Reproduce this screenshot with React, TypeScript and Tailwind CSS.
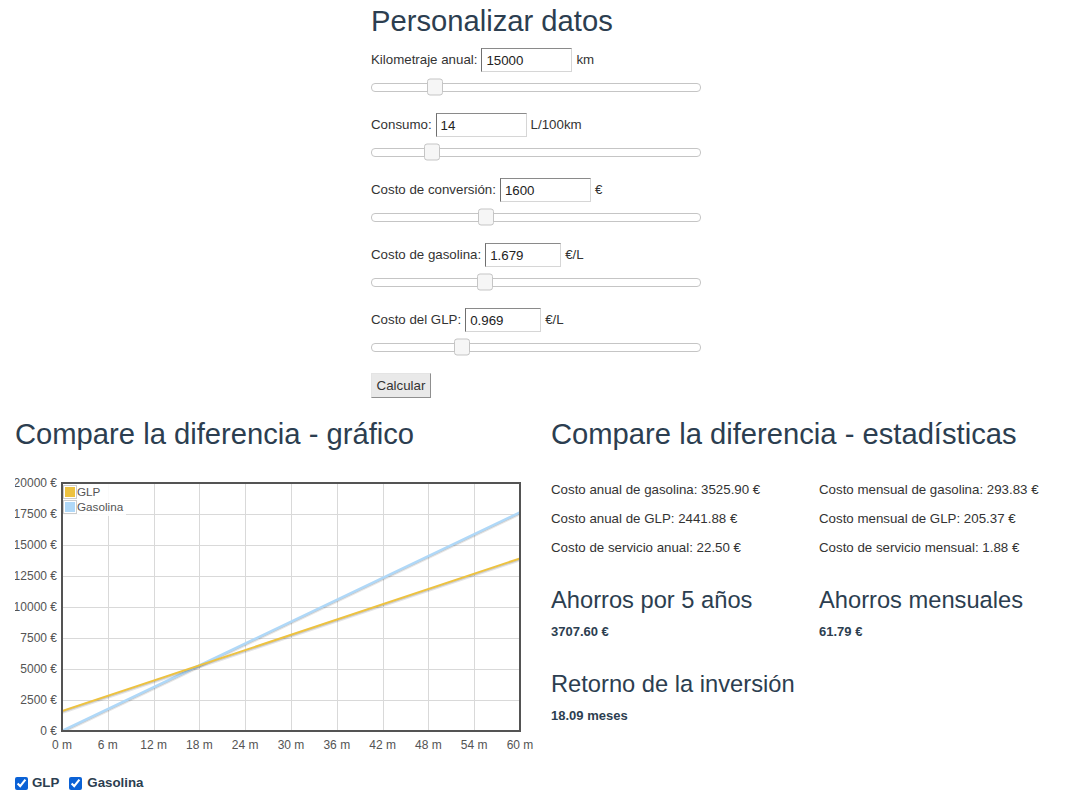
import { useState } from "react";

// Calculadora GLP vs gasolina: datos de entrada arriba, gráfico y estadísticas abajo.

type Field = {
  label: string;
  value: string;
  unit: string;
  width: string;
  thumb: number; // left offset of the slider handle, px
};

const FIELDS: Field[] = [
  { label: "Kilometraje anual:", value: "15000", unit: "km", width: "w-[91px]", thumb: 55 },
  { label: "Consumo:", value: "14", unit: "L/100km", width: "w-[91px]", thumb: 52 },
  { label: "Costo de conversión:", value: "1600", unit: "€", width: "w-[91px]", thumb: 106 },
  { label: "Costo de gasolina:", value: "1.679", unit: "€/L", width: "w-[76px]", thumb: 105 },
  { label: "Costo del GLP:", value: "0.969", unit: "€/L", width: "w-[76px]", thumb: 82 },
];

const CONVERSION = 1600;
const GLP_MONTH = 205.37;
const GAS_MONTH = 293.83;

// chart geometry (svg coords)
const W = 522;
const H = 290;
const L = 47;
const R = 505;
const T = 15;
const B = 263;
const xAt = (m: number) => L + (m / 60) * (R - L);
const yAt = (v: number) => B - (v / 20000) * (B - T);
const px = (n: number) => Math.round(n) + 0.5;

function Slider({ thumb }: { thumb: number }) {
  return (
    <div className="mt-[6px] flex h-[18px] items-center">
      <div className="relative h-[9px] w-full rounded-[4px] border border-[#c5c5c5] bg-white">
        <span
          className="absolute top-1/2 h-[17px] w-[16px] -translate-y-1/2 rounded-[3px] border border-[#c5c5c5] bg-[#f6f6f6]"
          style={{ left: thumb }}
        />
      </div>
    </div>
  );
}

function Chart({ showGlp, showGas }: { showGlp: boolean; showGas: boolean }) {
  const yTicks = Array.from({ length: 9 }, (_, i) => i * 2500);
  const xTicks = Array.from({ length: 11 }, (_, i) => i * 6);

  const glp = `M${xAt(0)},${yAt(CONVERSION)} L${xAt(60)},${yAt(CONVERSION + GLP_MONTH * 60)}`;
  const gas = `M${xAt(0)},${yAt(0)} L${xAt(60)},${yAt(GAS_MONTH * 60)}`;

  return (
    <svg width={W} height={H} className="mt-[17px] block" fontFamily="Liberation Sans, Arial, sans-serif">
      <defs>
        <clipPath id="plot">
          <rect x={L} y={T} width={R - L} height={B - T} />
        </clipPath>
      </defs>
      {/* grid */}
      {yTicks.map((v) => (
        <line key={`h${v}`} x1={L} x2={R} y1={px(yAt(v))} y2={px(yAt(v))} stroke="#d9d9d9" />
      ))}
      {xTicks.map((m) => (
        <line key={`v${m}`} x1={px(xAt(m))} x2={px(xAt(m))} y1={T} y2={B} stroke="#d9d9d9" />
      ))}
      {/* series */}
      <g clipPath="url(#plot)" fill="none" strokeLinecap="round">
        {showGas && (
          <>
            <path d={gas} transform="translate(0,2)" stroke="rgba(0,0,0,0.1)" strokeWidth={2} />
            <path d={gas} transform="translate(0,1)" stroke="rgba(0,0,0,0.15)" strokeWidth={1.5} />
            <path d={gas} stroke="#afd8f8" strokeWidth={2.5} />
          </>
        )}
        {showGlp && (
          <>
            <path d={glp} transform="translate(0,2)" stroke="rgba(0,0,0,0.1)" strokeWidth={2} />
            <path d={glp} transform="translate(0,1)" stroke="rgba(0,0,0,0.15)" strokeWidth={1.5} />
            <path d={glp} stroke="#edc240" strokeWidth={2} />
          </>
        )}
      </g>
      {/* frame */}
      <rect x={L} y={T} width={R - L} height={B - T} fill="none" stroke="#545454" strokeWidth={2} />
      {/* tick labels */}
      {yTicks.map((v) => (
        <text key={`yl${v}`} x={42} y={yAt(v) + 4} fontSize={12} fill="#545454" textAnchor="end">
          {v} €
        </text>
      ))}
      {xTicks.map((m) => (
        <text key={`xl${m}`} x={xAt(m)} y={281} fontSize={12} fill="#545454" textAnchor="middle">
          {m} m
        </text>
      ))}
      {/* legend */}
      <rect x={48} y={16} width={63} height={32} fill="#fff" opacity={0.85} />
      <rect x={48.5} y={17.5} width={13} height={13} fill="#fff" stroke="#cccccc" />
      <rect x={50} y={19} width={10} height={10} fill="#edc240" />
      <text x={62} y={28} fontSize={11.7} fill="#545454">
        GLP
      </text>
      <rect x={48.5} y={32.5} width={13} height={13} fill="#fff" stroke="#cccccc" />
      <rect x={50} y={34} width={10} height={10} fill="#afd8f8" />
      <text x={62} y={43} fontSize={11.7} fill="#545454">
        Gasolina
      </text>
    </svg>
  );
}

export default function App() {
  const [showGlp, setShowGlp] = useState(true);
  const [showGas, setShowGas] = useState(true);

  return (
    <div className="font-['Liberation_Sans',Arial,sans-serif] text-[#333]">
      {/* Personalizar datos */}
      <div className="mx-auto w-[330px]">
        <h1 className="mt-[4px] text-[29.2px] leading-[34px] text-[#2c3e50]">Personalizar datos</h1>
        {FIELDS.map((f, i) => (
          <div key={f.label} className={i === 0 ? "mt-[10px]" : "mt-[17px]"}>
            <div className="flex h-[24px] items-center gap-[4px] text-[13.3px]">
              <label>{f.label}</label>
              <input
                readOnly
                value={f.value}
                className={`${f.width} h-[24px] border border-t-[#8a8a8a] border-l-[#6f6f6f] border-r-[#d6d6d6] border-b-[#d6d6d6] bg-white pl-[4px] text-[13.3px] text-[#222] outline-none`}
              />
              <span>{f.unit}</span>
            </div>
            <Slider thumb={f.thumb} />
          </div>
        ))}
        <button className="mt-[17px] h-[25px] w-[60px] border border-t-[#e4e4e4] border-l-[#e4e4e4] border-r-[#8f8f8f] border-b-[#8f8f8f] bg-[#e9e9e9] text-[13.3px] text-[#333]">
          Calcular
        </button>
      </div>

      {/* Compare */}
      <div className="mt-[19px] grid grid-cols-2">
        <div className="px-[15px]">
          <h2 className="text-[29.2px] leading-[34px] text-[#2c3e50]">Compare la diferencia - gráfico</h2>
          <Chart showGlp={showGlp} showGas={showGas} />
          <div className="mt-[15px] flex h-[20px] items-center text-[13.3px] font-bold text-[#2c3e50]">
            <input
              type="checkbox"
              checked={showGlp}
              onChange={(e) => setShowGlp(e.target.checked)}
              className="m-0 h-[13px] w-[13px] accent-[#0b62d6]"
            />
            <span className="ml-[4px]">GLP</span>
            <input
              type="checkbox"
              checked={showGas}
              onChange={(e) => setShowGas(e.target.checked)}
              className="m-0 ml-[10px] h-[13px] w-[13px] accent-[#0b62d6]"
            />
            <span className="ml-[5px]">Gasolina</span>
          </div>
        </div>

        <div className="px-[15px]">
          <h2 className="text-[29.2px] leading-[34px] text-[#2c3e50]">Compare la diferencia - estadísticas</h2>
          <div className="-mx-[15px] mt-[24px] grid grid-cols-2 text-[13.3px] leading-[29px]">
            <div className="px-[15px]">
              <p>Costo anual de gasolina: 3525.90 €</p>
              <p>Costo anual de GLP: 2441.88 €</p>
              <p>Costo de servicio anual: 22.50 €</p>
            </div>
            <div className="px-[15px]">
              <p>Costo mensual de gasolina: 293.83 €</p>
              <p>Costo mensual de GLP: 205.37 €</p>
              <p>Costo de servicio mensual: 1.88 €</p>
            </div>
          </div>
          <div className="-mx-[15px] mt-[24px] grid grid-cols-2">
            <div className="px-[15px]">
              <h3 className="text-[23.7px] leading-[28px] text-[#2c3e50]">Ahorros por 5 años</h3>
              <p className="mt-[9px] text-[13px] font-bold leading-[18px] text-[#2c3e50]">3707.60 €</p>
            </div>
            <div className="px-[15px]">
              <h3 className="text-[23.7px] leading-[28px] text-[#2c3e50]">Ahorros mensuales</h3>
              <p className="mt-[9px] text-[13px] font-bold leading-[18px] text-[#2c3e50]">61.79 €</p>
            </div>
          </div>
          <h3 className="mt-[29px] text-[23.7px] leading-[28px] text-[#2c3e50]">Retorno de la inversión</h3>
          <p className="mt-[9px] text-[13px] font-bold leading-[18px] text-[#2c3e50]">18.09 meses</p>
        </div>
      </div>
    </div>
  );
}
